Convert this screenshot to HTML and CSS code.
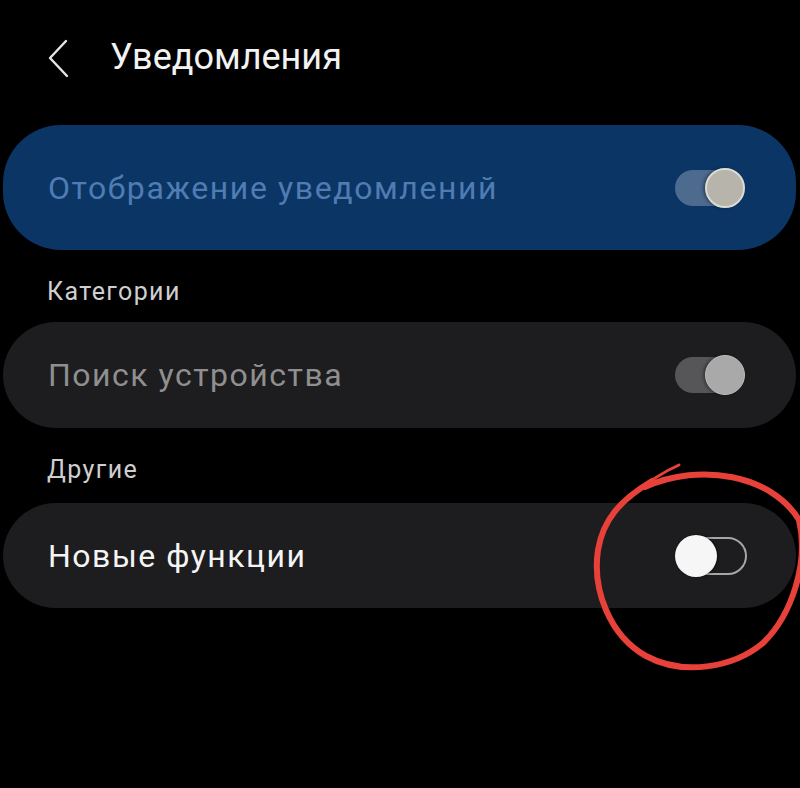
FILE: index.html
```html
<!DOCTYPE html>
<html lang="ru">
<head>
<meta charset="utf-8">
<link rel="stylesheet" href="styles.css">
</head>
<body>
<div class="screen">
  <header class="header">
    <svg class="back" width="24" height="40" viewBox="0 0 24 40">
      <path d="M18 3 L2 20 L19 38" fill="none" stroke="#e6e6e6" stroke-width="2.4" stroke-linecap="round" stroke-linejoin="round"/>
    </svg>
    <h1 class="title">Уведомления</h1>
  </header>

  <div class="card card-main">
    <span class="card-text main-text">Отображение уведомлений</span>
    <div class="toggle on blue">
      <span class="track"></span>
      <span class="knob"></span>
    </div>
  </div>

  <div class="section">Категории</div>
  <div class="card card-dark">
    <span class="card-text dim-text">Поиск устройства</span>
    <div class="toggle on gray">
      <span class="track"></span>
      <span class="knob"></span>
    </div>
  </div>

  <div class="section">Другие</div>
  <div class="card card-dark card-last">
    <span class="card-text white-text">Новые функции</span>
    <div class="toggle off">
      <span class="track"></span>
      <span class="knob"></span>
    </div>
  </div>

  <svg class="mark" width="800" height="788" viewBox="0 0 800 788">
    <path d="M634 494 C648 482 663 472 679 465" fill="none" stroke="#e8413a" stroke-width="3" stroke-linecap="round"/>
    <path d="M645 487 C700 462 772 475 799 520 C809 562 792 615 763 643 C733 668 683 676 646 656 C610 636 592 590 598 550 C603 520 620 500 652 481" fill="none" stroke="#e8413a" stroke-width="6" stroke-linecap="round"/>
  </svg>
</div>
</body>
</html>
```
FILE: styles.css
```css
html, body {
  margin: 0;
  padding: 0;
  background: #000;
}
.screen {
  position: relative;
  width: 800px;
  height: 788px;
  overflow: hidden;
  background: #000;
  font-family: Roboto, "Noto Sans", sans-serif;
}
.header {
  height: 114px;
  display: flex;
  align-items: center;
  padding-left: 48px;
  box-sizing: border-box;
}
.back {
  display: block;
  margin-right: 38px;
  margin-top: 2px;
}
.title {
  margin: 0;
  font-weight: 400;
  font-size: 36px;
  color: #f2f2f2;
  letter-spacing: 0;
}
.card {
  margin-left: 3px;
  width: 793px;
  box-sizing: border-box;
  display: flex;
  align-items: center;
  justify-content: space-between;
  padding: 0 49px 0 45px;
}
.card-main {
  margin-top: 11px;
  height: 125px;
  border-radius: 58px;
  background: #0b3564;
}
.card-dark {
  height: 106px;
  border-radius: 53px;
  background: #1d1c1e;
}
.card-last {
  height: 105px;
}
.card-text {
  font-size: 31px;
  line-height: 36px;
}
.main-text {
  color: #4f7cb3;
  font-size: 32px;
  letter-spacing: 1.6px;
}
.dim-text {
  color: #8f8f8f;
  font-size: 32px;
  letter-spacing: 1.5px;
}
.white-text {
  color: #f4f4f4;
  font-size: 32px;
  letter-spacing: 1.5px;
}
.section {
  height: 72px;
  box-sizing: border-box;
  padding: 27px 0 0 47px;
  font-size: 25px;
  line-height: 30px;
  color: #cfcfcf;
  letter-spacing: 1.4px;
}
.section + .card-dark.card-last {
  margin-top: 3px;
}
.toggle {
  position: relative;
  width: 72px;
  height: 42px;
  flex-shrink: 0;
}
.track {
  position: absolute;
  left: 0;
  top: 3px;
  width: 62px;
  height: 36px;
  border-radius: 18px;
  box-sizing: border-box;
}
.knob {
  position: absolute;
  top: 1px;
  width: 40px;
  height: 40px;
  border-radius: 50%;
  box-sizing: border-box;
}
.on .knob {
  right: 2px;
}
.blue .track {
  background: #4d6a8f;
}
.blue .knob {
  background: #b6b4ab;
  border: 2px solid #dcdcd6;
  box-shadow: -2px 0 3px rgba(0, 0, 0, 0.35);
}
.gray .track {
  background: #565658;
}
.gray .knob {
  background: #a9a9a9;
  border: 1px solid #bdbdbd;
  box-shadow: -2px 0 3px rgba(0, 0, 0, 0.35);
}
.off .track {
  left: 1px;
  top: 2px;
  width: 71px;
  height: 38px;
  border-radius: 19px;
  border: 2px solid #a6a6a6;
  background: transparent;
}
.off .knob {
  left: 0;
  top: 0;
  width: 42px;
  height: 42px;
  background: #f6f6f6;
  box-shadow: 1px 0 3px rgba(0, 0, 0, 0.6);
}
.mark {
  position: absolute;
  left: 0;
  top: 0;
  pointer-events: none;
}
```
